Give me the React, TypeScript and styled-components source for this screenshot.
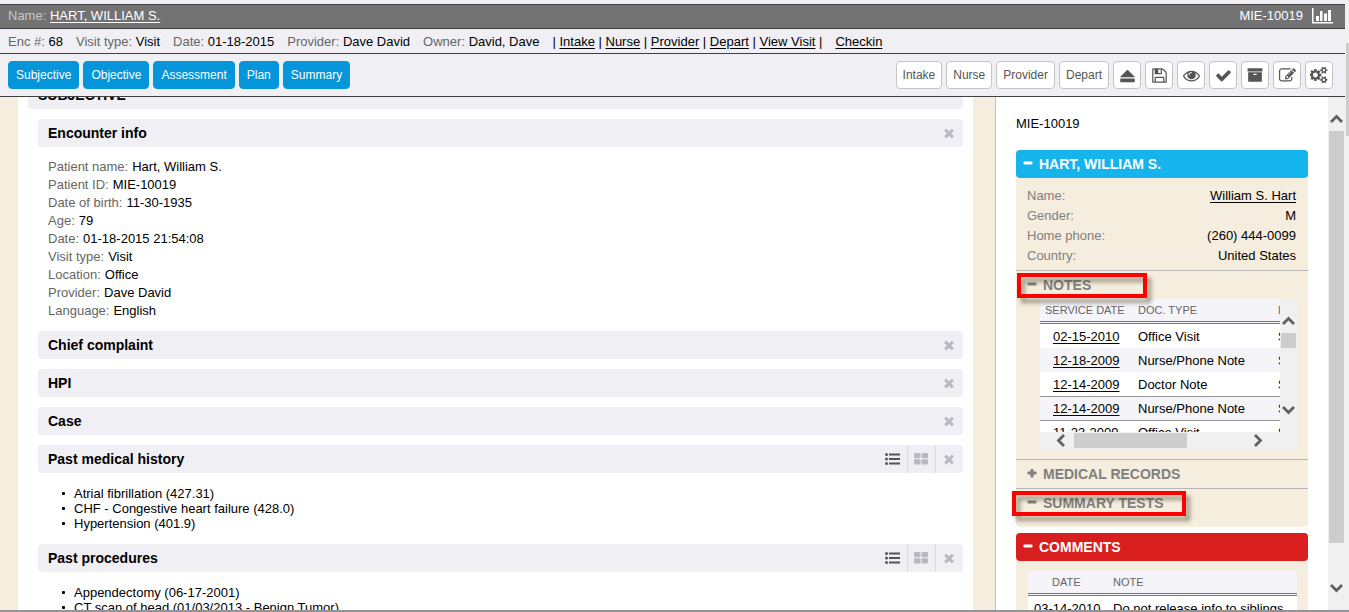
import React from "react";
import styled, { createGlobalStyle, css } from "styled-components";

const GlobalStyle = createGlobalStyle`
  *, *::before, *::after { box-sizing: border-box; }
  html, body { margin: 0; padding: 0; }
  body {
    font-family: "Liberation Sans", Arial, sans-serif;
    font-size: 13px;
    line-height: 18px;
    color: #000;
    background: #fff;
    overflow: hidden;
  }
  a { color: inherit; text-underline-offset: 2px; }
  button { font-family: inherit; cursor: pointer; }
  h2, h3, ul, dl, dd, dt, p { margin: 0; padding: 0; }
`;

const line = "#404043";
const panel = "#f0eff4";
const cream = "#f5eddd";

const Shell = styled.div`
  display: flex;
  height: 100vh;
  border-bottom: 2px solid #949496;
`;

const Page = styled.div`
  flex: 1;
  min-width: 0;
  display: flex;
  flex-direction: column;
  padding-top: 4px;
  background: ${panel};
`;

const NameBar = styled.header`
  display: flex;
  align-items: center;
  justify-content: space-between;
  height: 25px;
  padding: 0 12px 2px 8px;
  background: #737373;
  border-top: 1px solid ${line};
  border-bottom: 1px solid ${line};
  color: #fff;
`;

const PatientNumber = styled.div`
  display: flex;
  align-items: center;
  gap: 9px;
`;

const Caption = styled.span<{ $tone?: string }>`
  color: ${(p) => p.$tone ?? "#666"};
`;

const VisitBar = styled.div`
  display: flex;
  align-items: center;
  gap: 13px;
  height: 25px;
  padding: 1px 8px 0;
  border-bottom: 1px solid ${line};
  white-space: nowrap;
`;

const Toolbar = styled.div`
  display: flex;
  align-items: center;
  justify-content: space-between;
  height: 43px;
  padding: 0 12px 0 8px;
  border-bottom: 1px solid ${line};
`;

const ButtonGroup = styled.div`
  display: flex;
  gap: 4px;
`;

const ToolButton = styled.button<{ $kind?: "primary" | "icon" }>`
  display: flex;
  align-items: center;
  justify-content: center;
  height: 28px;
  padding: 0 6px;
  border: 1px solid #c4c4c6;
  border-radius: 4px;
  background: #fff;
  color: #555;
  font-size: 12px;
  line-height: 16px;
  ${(p) =>
    p.$kind === "primary" &&
    css`
      padding: 0 7px;
      border-color: #0595da;
      background: #0595da;
      color: #fff;
    `}
  ${(p) =>
    p.$kind === "icon" &&
    css`
      width: 28px;
      padding: 0;
    `}
`;

const Body = styled.div`
  flex: 1;
  min-height: 0;
  display: flex;
`;

const Chart = styled.main`
  flex: 1;
  min-width: 0;
  overflow: hidden;
  padding: 0 22px 0 18px;
  background: ${cream};
  border-right: 1px solid #c4c0ba;
`;

const Sheet = styled.div`
  min-height: 100%;
  padding: 0 10px;
  margin-top: -16px;
  background: #fff;
`;

const BarRow = styled.div`
  display: flex;
  align-items: center;
  justify-content: space-between;
  height: 28px;
  padding-left: 10px;
  border-radius: 4px;
  background: ${panel};
`;

const BarTitle = styled.h2`
  font-size: 14px;
  line-height: 18px;
`;

const BarActions = styled.div`
  display: flex;
  align-self: stretch;
`;

const BarAction = styled.button<{ $active?: boolean }>`
  display: flex;
  align-items: center;
  justify-content: center;
  width: 28px;
  padding: 0 1px 0 0;
  border: 0;
  background: none;
  color: ${(p) => (p.$active ? "#555" : "#b9b8bf")};
  & + & {
    border-left: 1px solid #dcdbe1;
    padding-right: 2px;
  }
`;

const Section = styled.section`
  margin: 10px 0 0 10px;
`;

const Facts = styled.dl`
  padding: 11px 10px 1px;
  div { display: flex; gap: 4px; }
  dt { color: #666; }
`;

const Bullets = styled.ul`
  padding: 13px 0 3px 36px;
  line-height: 15px;
  list-style: none;
  li { display: flex; align-items: center; }
  li::before {
    content: "";
    width: 3px;
    height: 3px;
    margin: 0 9px 0 -12px;
    border-radius: 1px;
    background: #000;
  }
`;

const Side = styled.aside`
  width: 332px;
  overflow: hidden;
  padding: 18px 20px 0;
  background: #fff;
`;

const SideCard = styled.section`
  margin-top: 6px;
  border-radius: 4px;
  background: ${cream};
`;

const SideId = styled.p`
  padding-bottom: 11px;
`;

const SideHeader = styled.h2<{ $color: string }>`
  display: flex;
  align-items: center;
  gap: 6px;
  height: 28px;
  padding-left: 7px;
  border-radius: 4px;
  background: ${(p) => p.$color};
  color: #fff;
  font-size: 14px;
  line-height: 18px;
`;

const Demographics = styled.dl`
  padding: 8px 12px 4px 11px;
  line-height: 20px;
  div { display: flex; justify-content: space-between; }
  dt { color: #808080; }
`;

const SubSection = styled.section<{ $tall?: boolean }>`
  border-top: 1px solid #b7b6b2;
  padding-bottom: ${(p) => (p.$tall ? "10px" : "0")};
`;

const SubTitle = styled.h3`
  position: relative;
  display: flex;
  align-items: center;
  gap: 6px;
  height: 28px;
  padding-left: 11px;
  color: #808080;
  font-size: 14px;
  line-height: 18px;
`;

const Callout = styled.span<{ $wide?: boolean }>`
  position: absolute;
  top: 2px;
  left: ${(p) => (p.$wide ? "-4px" : "1px")};
  width: ${(p) => (p.$wide ? "174px" : "130px")};
  height: 25px;
  border: 4px solid #f00;
  filter: drop-shadow(4px 5px 2px rgba(70, 60, 40, 0.5));
`;

const NotesFrame = styled.div`
  display: grid;
  grid-template-columns: 1fr 17px;
  grid-template-rows: 133px 17px;
  margin: 0 11px 0 24px;
  background: #f0f0f0;
`;

const NotesView = styled.div`
  overflow: hidden;
  background: #fff;
`;

const RecordTable = styled.table`
  width: 100%;
  border-collapse: separate;
  border-spacing: 0;
  background: #fff;
  white-space: nowrap;
  th {
    height: 25px;
    padding: 0;
    border-bottom: 3px double #77777a;
    background: #f5f4f8;
    color: #666;
    font-size: 11px;
    font-weight: normal;
    line-height: 16px;
    text-align: left;
  }
  td { height: 24px; padding: 1px 0 0; }
`;

const NotesTable = styled(RecordTable)`
  table-layout: fixed;
  width: 340px;
  th:first-child { padding-left: 5px; }
  td:first-child { padding-left: 13px; }
  tbody tr:nth-child(even) td { background: #f5f4f8; }
  tbody tr:nth-child(n + 4) td { border-top: 1px solid #949496; }
`;

const CommentsTable = styled(RecordTable)`
  table-layout: fixed;
  th:first-child { padding-left: 24px; }
  td:first-child { padding-left: 6px; }
`;

const CommentsBody = styled.div`
  padding: 10px 11px 12px 12px;
`;

const Rail = styled.div`
  display: flex;
  flex-direction: column;
  align-items: center;
  width: 17px;
  padding: 17px 0;
  background: #f0f0f0;
`;

const RailTrack = styled.div`
  flex: 1;
  width: 15px;
  margin: 8px 0 41px;
`;

const RailThumb = styled.div<{ $size: string }>`
  height: ${(p) => p.$size};
  background: #cdcdcd;
`;

const NotesRail = styled.div`
  display: flex;
  flex-direction: column;
  align-items: center;
  padding: 17px 0;
`;

const NotesFoot = styled.div`
  display: flex;
  align-items: center;
  grid-column: 1 / -1;
  padding: 0 32px 0 14px;
`;

const NotesTrack = styled.div<{ $across?: boolean }>`
  flex: 1;
  align-self: stretch;
  margin: ${(p) => (p.$across ? "1px 7px" : "8px 1px")};
`;

const NotesThumb = styled.div<{ $across?: boolean }>`
  width: ${(p) => (p.$across ? "66%" : "15px")};
  height: ${(p) => (p.$across ? "100%" : "15px")};
  background: #cdcdcd;
`;

const OuterRail = styled.div`
  width: 4px;
  padding: 43px 0 0 1px;
  background: #f0f0f0;
`;

const OuterThumb = styled.div`
  height: 93px;
  background: #cdcdcd;
`;

const Svg = ({ d, size = 16, box = "0 0 1792 1792" }: { d: string; size?: number; box?: string }) => (
  <svg width={size} height={size} viewBox={box} fill="currentColor" aria-hidden="true">
    <path d={d} />
  </svg>
);

const smallCog =
  "v140q0 16-149 31-12 27-30 52 51 113 51 138 0 4-4 7-122 71-124 71-8 0-46-47t-52-68q-20 2-30 2t-30-2q-14 21-52 68t-46 47q-2 0-124-71-4-3-4-7 0-25 51-138-18-25-30-52-149-15-149-31v-140q0-16 149-31 13-29 30-52-51-113-51-138 0-4 4-7 4-2 35-20t59-34 30-16q8 0 46 46.500t52 67.500q20-2 30-2t30 2q51-71 92-112l6-2q4 0 124 70 4 3 4 7 0 25-51 138 17 23 30 52 149 15 149 31z";

const paths = {
  eject:
    "M142 1035l710-710q19-19 45-19t45 19l710 710q19 19 13 32t-32 13h-1472q-26 0-32-13t13-32zm1459 565h-1408q-26 0-45-19t-19-45v-256q0-26 19-45t45-19h1408q26 0 45 19t19 45v256q0 26-19 45t-45 19z",
  save: "M512 1536h768v-384h-768v384zm896 0h128v-896q0-14-10-38.500t-20-34.500l-281-281q-10-10-34-20t-39-10v416q0 40-28 68t-68 28h-576q-40 0-68-28t-28-68v-416h-128v1280h128v-416q0-40 28-68t68-28h832q40 0 68 28t28 68v416zm-384-928v-320q0-13-9.500-22.500t-22.500-9.500h-192q-13 0-22.500 9.500t-9.500 22.500v320q0 13 9.500 22.500t22.500 9.500h192q13 0 22.500-9.500t9.500-22.500zm640 32v928q0 40-28 68t-68 28h-1344q-40 0-68-28t-28-68v-1344q0-40 28-68t68-28h928q40 0 88 20t76 48l280 280q28 28 48 76t20 88z",
  view: "M1664 960q-152-236-381-353 61 104 61 225 0 185-131.500 316.500t-316.500 131.500-316.500-131.500-131.500-316.500q0-121 61-225-229 117-381 353 133 205 333.500 326.500t434.500 121.500 434.500-121.500 333.500-326.500zm-720-384q0-20-14-34t-34-14q-125 0-214.500 89.500t-89.500 214.500q0 20 14 34t34 14 34-14 14-34q0-86 61-147t147-61q20 0 34-14t14-34zm848 384q0 34-20 69-140 230-376.500 368.500t-499.500 138.500-499.500-139-376.500-368q-20-35-20-69t20-69q140-229 376.500-368t499.500-139 499.500 139 376.500 368q20 35 20 69z",
  check:
    "M1671 566q0 40-28 68l-724 724-136 136q-28 28-68 28t-68-28l-136-136-362-362q-28-28-28-68t28-68l136-136q28-28 68-28t68 28l294 295 656-657q28-28 68-28t68 28l136 136q28 28 28 68z",
  archive:
    "M1088 832q0-26-19-45t-45-19h-256q-26 0-45 19t-19 45 19 45 45 19h256q26 0 45-19t19-45zm576-192v960q0 26-19 45t-45 19h-1408q-26 0-45-19t-19-45v-960q0-26 19-45t45-19h1408q26 0 45 19t19 45zm64-448v256q0 26-19 45t-45 19h-1536q-26 0-45-19t-19-45v-256q0-26 19-45t45-19h1536q26 0 45 19t19 45z",
  edit: "M888 1184l116-116-152-152-116 116v56h96v96h56zm440-720q-16-16-33 1l-350 350q-17 17-1 33t33-1l350-350q17-17 1-33zm80 594v190q0 119-84.500 203.500t-203.500 84.500h-832q-119 0-203.500-84.500t-84.500-203.500v-832q0-119 84.500-203.500t203.500-84.500h832q63 0 117 25 15 7 18 23 3 17-9 29l-49 49q-14 14-32 8-23-6-45-6h-832q-66 0-113 47t-47 113v832q0 66 47 113t113 47h832q66 0 113-47t47-113v-126q0-13 9-22l64-64q15-15 35-7t20 29zm-96-738l288 288-672 672h-288v-288zm444 132l-92 92-288-288 92-92q28-28 68-28t68 28l152 152q28 28 28 68t-28 68z",
  settings:
    "M832 896q0-106-75-181t-181-75-181 75-75 181 75 181 181 75 181-75 75-181zm768 512q0-52-38-90t-90-38-90 38-38 90q0 53 37.500 90.500t90.500 37.500 90.500-37.500 37.500-90.500zm0-1024q0-52-38-90t-90-38-90 38-38 90q0 53 37.500 90.500t90.500 37.500 90.500-37.500 37.500-90.500zm-384 421v185q0 10-7 19.500t-16 10.500l-155 24q-11 35-32 76 34 48 90 115 7 11 7 20 0 12-7 19-23 30-82.500 89.500t-78.500 59.500q-11 0-21-7l-115-90q-37 19-77 31-11 108-23 155-7 24-30 24h-186q-11 0-20-7.500t-10-17.500l-23-153q-34-10-75-31l-118 89q-7 7-20 7-11 0-21-8-144-133-144-160 0-9 7-19 10-14 41-53t47-61q-23-44-35-82l-152-24q-10-1-17-9.500t-7-19.500v-185q0-10 7-19.500t16-10.500l155-24q11-35 32-76-34-48-90-115-7-11-7-20 0-12 7-20 22-30 82-89t79-59q11 0 21 7l115 90q34-18 77-32 11-108 23-154 7-24 30-24h186q11 0 20 7.500t10 17.500l23 153q34 10 75 31l118-89q8-7 20-7 11 0 21 8 144 133 144 160 0 8-7 19-12 16-42 54t-45 60q23 48 34 82l152 23q10 2 17 10.500t7 19.500zm640 533" +
    smallCog +
    "M1856 314" +
    smallCog,
  times:
    "M1490 1322q0 40-28 68l-136 136q-28 28-68 28t-68-28l-294-294-294 294q-28 28-68 28t-68-28l-136-136q-28-28-28-68t28-68l294-294-294-294q-28-28-28-68t28-68l136-136q28-28 68-28t68 28l294 294 294-294q28-28 68-28t68 28l136 136q28 28 28 68t-28 68l-294 294 294 294q28 28 28 68z",
};

const ListIcon = () => (
  <svg width="15" height="12" viewBox="0 0 15 12" fill="currentColor" aria-hidden="true">
    <circle cx="1.500" cy="1.500" r="1.500" />
    <circle cx="1.500" cy="6" r="1.500" />
    <circle cx="1.500" cy="10.500" r="1.500" />
    <path d="M4 .5h11v2H4zM4 5h11v2H4zM4 9.500h11v2H4z" />
  </svg>
);

const GridIcon = () => (
  <svg width="14" height="12" viewBox="0 0 14 12" fill="currentColor" aria-hidden="true">
    <rect width="6.500" height="5.300" rx="1" />
    <rect x="7.500" width="6.500" height="5.300" rx="1" />
    <rect y="6.300" width="6.500" height="5.300" rx="1" />
    <rect x="7.500" y="6.300" width="6.500" height="5.300" rx="1" />
  </svg>
);

const ChartIcon = () => (
  <svg width="21" height="16" viewBox="0 0 21 16" fill="currentColor" aria-hidden="true">
    <path d="M0 0h1.500v14H21v1.500H0zM4 8h3v5H4zM8 3h2.500v10H8zM12 5.500h3V13h-3zM16 2h3v11h-3z" />
  </svg>
);

const Toggle = ({ open }: { open?: boolean }) => (
  <svg width="10" height="10" viewBox="0 0 10 10" fill="currentColor" aria-hidden="true">
    <rect x="0.500" y="2.500" width="9" height="3" rx="0.800" />
    {!open && <rect x="3.500" y="0" width="3" height="8.500" rx="0.800" />}
  </svg>
);

const turns = { up: 0, right: 90, down: 180, left: 270 };
const Arrow = ({ to }: { to: keyof typeof turns }) => (
  <svg width="13" height="9" viewBox="-6.500 -4.500 13 9" overflow="visible" aria-hidden="true">
    <path
      d="M-5.500 3.500L0-2L5.500 3.500"
      transform={`rotate(${turns[to]})`}
      fill="none"
      stroke="#606060"
      strokeWidth="2.800"
    />
  </svg>
);

const Bar = ({ title, views }: { title: string; views?: boolean }) => (
  <BarRow>
    <BarTitle>{title}</BarTitle>
    <BarActions>
      {views && (
        <>
          <BarAction $active aria-label={`${title}: list`}><ListIcon /></BarAction>
          <BarAction aria-label={`${title}: grid`}><GridIcon /></BarAction>
        </>
      )}
      <BarAction aria-label={`${title}: remove`}><Svg d={paths.times} size={14} /></BarAction>
    </BarActions>
  </BarRow>
);

const visit = [
  ["Enc #:", "68"],
  ["Visit type:", "Visit"],
  ["Date:", "01-18-2015"],
  ["Provider:", "Dave David"],
  ["Owner:", "David, Dave"],
];
const visitLinks = ["Intake", "Nurse", "Provider", "Depart", "View Visit"];
const jumps = ["Subjective", "Objective", "Assessment", "Plan", "Summary"];
const stages = ["Intake", "Nurse", "Provider", "Depart"];
const tools = ["eject", "save", "view", "check", "archive", "edit", "settings"] as const;

const encounter = [
  ["Patient name:", "Hart, William S."],
  ["Patient ID:", "MIE-10019"],
  ["Date of birth:", "11-30-1935"],
  ["Age:", "79"],
  ["Date:", "01-18-2015 21:54:08"],
  ["Visit type:", "Visit"],
  ["Location:", "Office"],
  ["Provider:", "Dave David"],
  ["Language:", "English"],
];

const notes = [
  ["02-15-2010", "Office Visit"],
  ["12-18-2009", "Nurse/Phone Note"],
  ["12-14-2009", "Doctor Note"],
  ["12-14-2009", "Nurse/Phone Note"],
  ["11-23-2009", "Office Visit"],
];

export default function App() {
  return (
    <>
      <GlobalStyle />
      <Shell>
        <Page>
          <NameBar>
            <div>
              <Caption $tone="#c8c8c8">Name:</Caption> <a href="#patient">HART, WILLIAM S.</a>
            </div>
            <PatientNumber>
              MIE-10019 <ChartIcon />
            </PatientNumber>
          </NameBar>
          <VisitBar>
            {visit.map(([k, v]) => (
              <span key={k}>
                <Caption>{k}</Caption> {v}
              </span>
            ))}
            <span>
              |{" "}
              {visitLinks.map((l) => (
                <React.Fragment key={l}>
                  <a href={`#${l}`}>{l}</a> |{" "}
                </React.Fragment>
              ))}
            </span>
            <a href="#checkin">Checkin</a>
          </VisitBar>
          <Toolbar>
            <ButtonGroup>
              {jumps.map((j) => (
                <ToolButton key={j} $kind="primary">{j}</ToolButton>
              ))}
            </ButtonGroup>
            <ButtonGroup>
              {stages.map((s) => (
                <ToolButton key={s}>{s}</ToolButton>
              ))}
              {tools.map((t) => (
                <ToolButton key={t} $kind="icon" aria-label={t}>
                  <Svg
                    d={paths[t]}
                    size={t === "settings" ? 18 : t === "archive" ? 16 : 17}
                    box={t === "settings" ? "0 -64 1920 1920" : "0 0 1792 1792"}
                  />
                </ToolButton>
              ))}
            </ButtonGroup>
          </Toolbar>
          <Body>
            <Chart>
              <Sheet>
                <BarRow>
                  <BarTitle>SUBJECTIVE</BarTitle>
                </BarRow>
                <Section>
                  <Bar title="Encounter info" />
                  <Facts>
                    {encounter.map(([k, v]) => (
                      <div key={k}>
                        <dt>{k}</dt>
                        <dd>{v}</dd>
                      </div>
                    ))}
                  </Facts>
                </Section>
                {["Chief complaint", "HPI", "Case"].map((t) => (
                  <Section key={t}>
                    <Bar title={t} />
                  </Section>
                ))}
                <Section>
                  <Bar title="Past medical history" views />
                  <Bullets>
                    <li>Atrial fibrillation (427.31)</li>
                    <li>CHF - Congestive heart failure (428.0)</li>
                    <li>Hypertension (401.9)</li>
                  </Bullets>
                </Section>
                <Section>
                  <Bar title="Past procedures" views />
                  <Bullets>
                    <li>Appendectomy (06-17-2001)</li>
                    <li>CT scan of head (01/03/2013 - Benign Tumor)</li>
                  </Bullets>
                </Section>
              </Sheet>
            </Chart>
            <Side>
              <SideId>MIE-10019</SideId>
              <SideCard>
                <SideHeader $color="#16b4ec">
                  <Toggle open /> HART, WILLIAM S.
                </SideHeader>
                <Demographics>
                  <div><dt>Name:</dt><dd><a href="#patient">William S. Hart</a></dd></div>
                  <div><dt>Gender:</dt><dd>M</dd></div>
                  <div><dt>Home phone:</dt><dd>(260) 444-0099</dd></div>
                  <div><dt>Country:</dt><dd>United States</dd></div>
                </Demographics>
                <SubSection $tall>
                  <SubTitle><Toggle open /> NOTES<Callout /></SubTitle>
                  <NotesFrame>
                    <NotesView>
                      <NotesTable>
                        <colgroup>
                          <col width="98" />
                          <col width="140" />
                          <col />
                        </colgroup>
                        <thead>
                          <tr><th>SERVICE DATE</th><th>DOC. TYPE</th><th>DESC.</th></tr>
                        </thead>
                        <tbody>
                          {notes.map(([d, t], i) => (
                            <tr key={i}>
                              <td><a href="#note">{d}</a></td>
                              <td>{t}</td>
                              <td>S</td>
                            </tr>
                          ))}
                        </tbody>
                      </NotesTable>
                    </NotesView>
                    <NotesRail>
                      <Arrow to="up" />
                      <NotesTrack><NotesThumb /></NotesTrack>
                      <Arrow to="down" />
                    </NotesRail>
                    <NotesFoot>
                      <Arrow to="left" />
                      <NotesTrack $across><NotesThumb $across /></NotesTrack>
                      <Arrow to="right" />
                    </NotesFoot>
                  </NotesFrame>
                </SubSection>
                <SubSection>
                  <SubTitle><Toggle /> MEDICAL RECORDS</SubTitle>
                </SubSection>
                <SubSection $tall>
                  <SubTitle><Toggle open /> SUMMARY TESTS<Callout $wide /></SubTitle>
                </SubSection>
              </SideCard>
              <SideCard>
                <SideHeader $color="#d91e1e">
                  <Toggle open /> COMMENTS
                </SideHeader>
                <CommentsBody>
                  <CommentsTable>
                    <colgroup>
                      <col width="85" />
                      <col />
                    </colgroup>
                    <thead>
                      <tr><th>DATE</th><th>NOTE</th></tr>
                    </thead>
                    <tbody>
                      <tr><td>03-14-2010</td><td>Do not release info to siblings</td></tr>
                    </tbody>
                  </CommentsTable>
                </CommentsBody>
              </SideCard>
            </Side>
            <Rail>
              <Arrow to="up" />
              <RailTrack><RailThumb $size="100%" /></RailTrack>
              <Arrow to="down" />
            </Rail>
          </Body>
        </Page>
        <OuterRail><OuterThumb /></OuterRail>
      </Shell>
    </>
  );
}
